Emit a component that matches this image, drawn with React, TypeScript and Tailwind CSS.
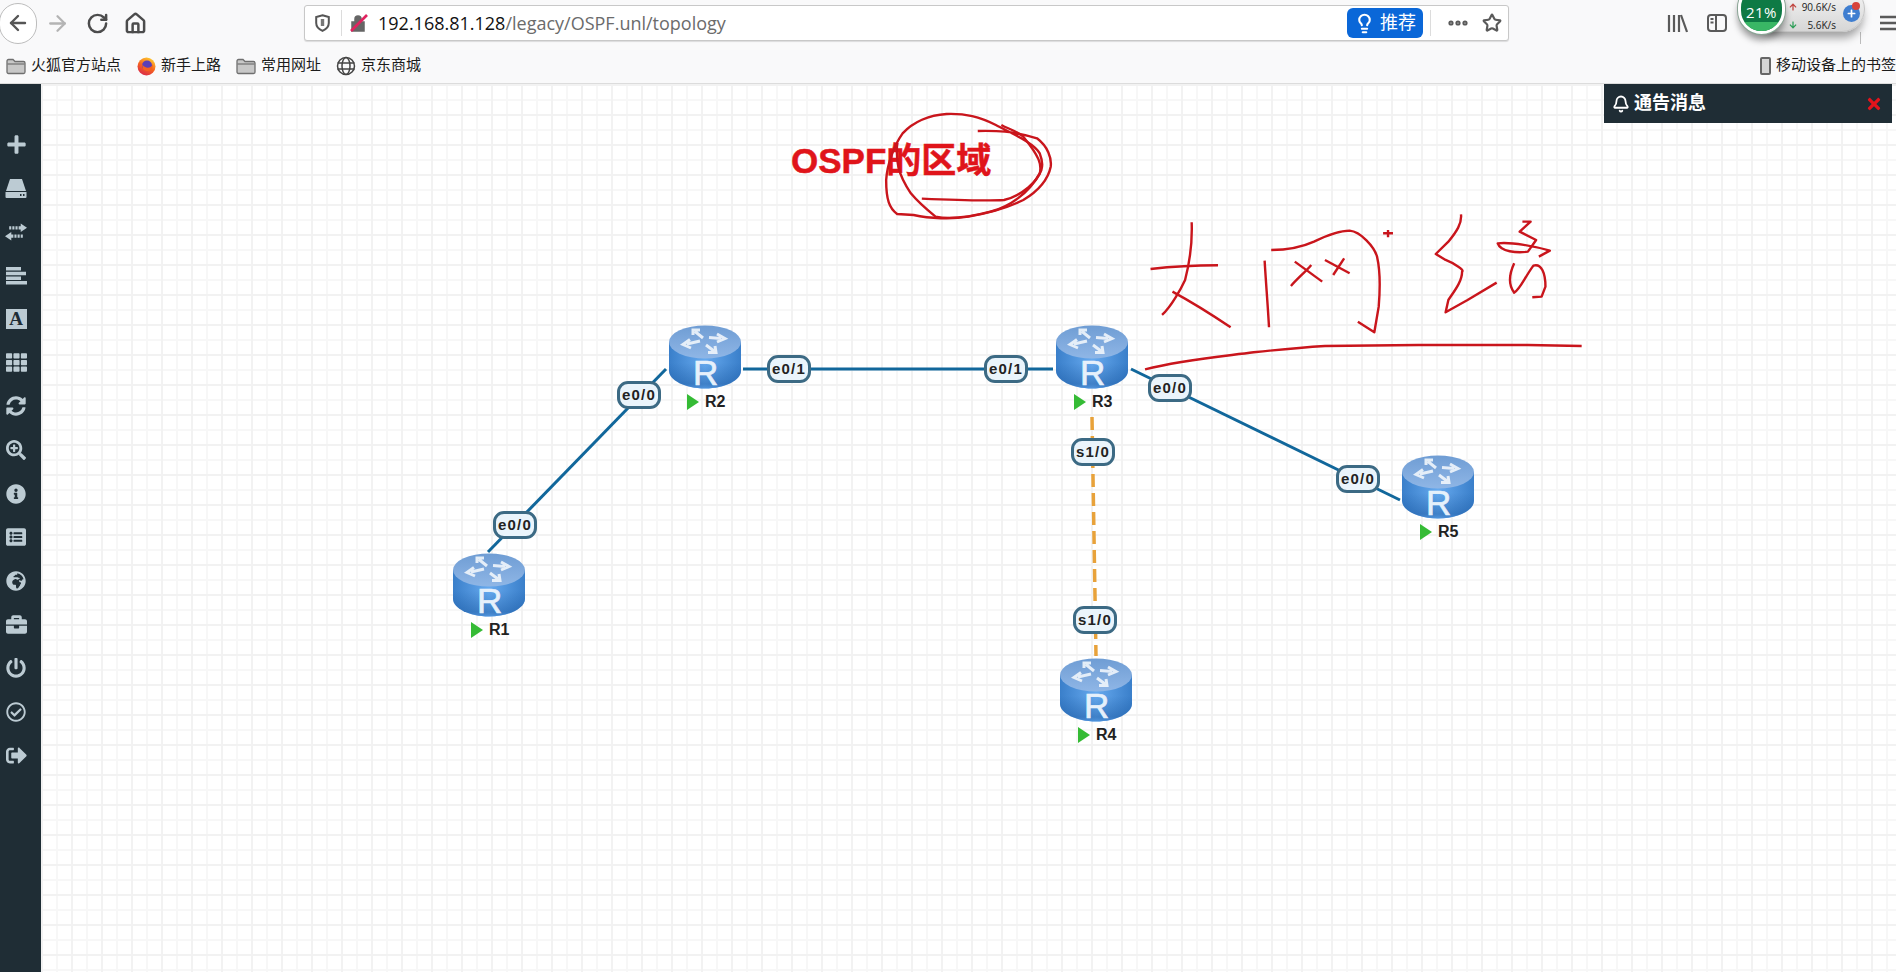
import { ArrowLeft, ArrowRight, Bell, Ellipsis, House, Lightbulb, RotateCw, Star } from "lucide-react";
import {
  FaArrowDown,
  FaArrowUp,
  FaBriefcase,
  FaGlobeAfrica,
  FaInfoCircle,
  FaListAlt,
  FaPlus,
  FaPowerOff,
  FaRegCheckCircle,
  FaSearchPlus,
  FaSignOutAlt,
  FaSyncAlt,
  FaTh,
  FaTimes,
} from "react-icons/fa";

const CJK = "font-['Liberation_Sans','Noto_Sans_CJK_SC',sans-serif]";

const routers = [
  { name: "R1", x: 453, y: 553 },
  { name: "R2", x: 669, y: 325 },
  { name: "R3", x: 1056, y: 325 },
  { name: "R4", x: 1060, y: 658 },
  { name: "R5", x: 1402, y: 455 },
];

const ports = [
  { text: "e0/0", x: 493, y: 511 },
  { text: "e0/0", x: 617, y: 381 },
  { text: "e0/1", x: 767, y: 355 },
  { text: "e0/1", x: 984, y: 355 },
  { text: "e0/0", x: 1148, y: 374 },
  { text: "e0/0", x: 1336, y: 465 },
  { text: "s1/0", x: 1071, y: 438 },
  { text: "s1/0", x: 1073, y: 606 },
];

// pen strokes, traced in a 1568x840 box that gets squeezed onto 860x280
const pen = [
  "M397 93 C430 92 460 92 505 115 C525 140 532 175 530 200 C525 240 505 275 480 300 C450 325 415 340 380 350 C350 358 310 356 280 345 L250 342 C236 325 230 300 230 240 C232 190 245 135 260 100 C280 65 310 45 340 42 C375 40 400 50 430 75 C465 105 500 130 510 160 C516 185 514 205 513 210 C505 245 480 285 445 300 C410 303 350 300 295 296",
  "M250 130 C248 180 250 220 275 280 C290 310 305 330 320 350 C345 358 385 350 420 335 C455 320 490 280 510 220 C514 195 510 170 480 110 C465 90 450 85 440 75",
  "M712 507 C750 500 790 496 835 496",
  "M787 367 C788 410 786 470 775 540 C768 565 750 620 733 645",
  "M752 575 C780 600 820 640 858 682",
  "M920 482 C922 540 926 620 928 682",
  "M932 450 C960 450 990 440 1010 425 C1035 405 1060 392 1075 392 C1095 395 1120 440 1125 470 C1132 520 1130 580 1128 620 L1120 697 L1090 665",
  "M975 485 L1025 545",
  "M1005 495 C995 515 980 535 968 558",
  "M1030 480 L1075 520",
  "M1065 475 L1045 525",
  "M1145 390 V412 M1136 400 H1154",
  "M1278 343 C1280 370 1270 395 1255 425 L1232 462 L1250 480 C1265 490 1285 510 1280 515 C1280 545 1265 575 1255 600 L1250 637 L1290 600 L1343 548",
  "M1390 365 L1405 365 L1385 395 L1415 420 L1400 455 C1380 460 1350 455 1345 430 C1370 425 1415 440 1440 452 L1420 470",
  "M1375 490 C1368 515 1362 550 1375 578 C1385 570 1395 530 1410 497 C1425 490 1432 520 1432 560 L1425 590 L1408 592",
  "M702 808 C770 780 840 770 900 757 C950 748 990 742 1030 738 L1200 735 L1400 735 L1498 738",
];

function RouterIcon({ id }: { id: string }) {
  return (
    <svg width="72" height="64" viewBox="0 0 72 64" className="block overflow-visible">
      <defs>
        <linearGradient id={`side-${id}`} x1="0" x2="1" y1="0" y2="0">
          <stop offset="0" stopColor="#3a7fca" />
          <stop offset="0.5" stopColor="#66a9ee" />
          <stop offset="1" stopColor="#3a7fca" />
        </linearGradient>
        <linearGradient id={`shade-${id}`} x1="0" x2="0" y1="0" y2="1">
          <stop offset="0.45" stopColor="#1b5aa3" stopOpacity="0" />
          <stop offset="0.9" stopColor="#1b5aa3" stopOpacity="0.5" />
          <stop offset="1" stopColor="#4a8ed8" stopOpacity="0.7" />
        </linearGradient>
        <linearGradient id={`top-${id}`} x1="0" x2="0" y1="0" y2="1">
          <stop offset="0" stopColor="#6f9dd4" />
          <stop offset="1" stopColor="#8fb6e6" />
        </linearGradient>
      </defs>
      <path d="M0 17 V46 C0 55 16 63.5 36 63.5 C56 63.5 72 55 72 46 V17 Z" fill={`url(#side-${id})`} />
      <path d="M0 17 V46 C0 55 16 63.5 36 63.5 C56 63.5 72 55 72 46 V17 Z" fill={`url(#shade-${id})`} />
      <ellipse cx="36" cy="17" rx="36" ry="16.5" fill={`url(#top-${id})`} />
      <g fill="none" stroke="#f0f5fb" strokeWidth="3" strokeOpacity="0.9">
        <path d="M34 13 L26 6.5 M31 5 H24 V10" />
        <path d="M31 16 L18 19 M21 14.5 L14 19.5 L22 23" />
        <path d="M40 12.5 L52 13.5 M48 9 L56 13.5 L48 17" />
        <path d="M37 20 L45 26 M39 27.5 H47 L46 21" />
      </g>
      <text x="24" y="60" fontFamily="Liberation Sans" fontSize="35" fill="#e6f0fb" stroke="#e6f0fb" strokeWidth="0.7">
        R
      </text>
    </svg>
  );
}

function Router({ name, x, y }: { name: string; x: number; y: number }) {
  return (
    <div className="absolute w-[72px]" style={{ left: x - 41, top: y - 84 }}>
      <RouterIcon id={name} />
      <div className="mt-[5px] ml-[18px] flex h-4 items-center gap-[6px]">
        <span className="h-0 w-0 border-y-[8px] border-l-[12px] border-y-transparent border-l-[#35bb35]" />
        <span className="font-['Liberation_Sans'] text-base leading-5 font-bold text-[#222]">{name}</span>
      </div>
    </div>
  );
}

function Port({ text, x, y }: { text: string; x: number; y: number }) {
  return (
    <div
      className="absolute flex h-[28px] w-[44px] items-center justify-center rounded-[11px] border-[3px] border-[#3c6a84] bg-[#eaf4fb] font-['Liberation_Sans'] text-[15px] font-bold tracking-[1.2px] text-[#222]"
      style={{ left: x - 41, top: y - 84 }}
    >
      {text}
    </div>
  );
}

function FolderIcon() {
  return (
    <svg width="20" height="18" viewBox="0 0 20 18">
      <path d="M1 4 a1.5 1.5 0 0 1 1.5 -1.5 H7 L9 4.5 H17.5 A1.5 1.5 0 0 1 19 6 V15 A1.5 1.5 0 0 1 17.5 16.5 H2.5 A1.5 1.5 0 0 1 1 15 Z" fill="#c8c8c8" stroke="#6f6f6f" strokeWidth="1.3" />
      <path d="M1.5 7 H18.5" stroke="#6f6f6f" strokeWidth="1.2" />
    </svg>
  );
}

function GlobeIcon() {
  return (
    <svg width="20" height="20" viewBox="0 0 20 20" fill="none" stroke="#444" strokeWidth="1.5">
      <circle cx="10" cy="10" r="8.5" />
      <ellipse cx="10" cy="10" rx="4" ry="8.5" />
      <path d="M1.5 7 H18.5 M1.5 13 H18.5" />
    </svg>
  );
}

function FirefoxIcon() {
  return (
    <svg width="19" height="20" viewBox="0 0 19 20">
      <defs>
        <linearGradient id="ff" x1="0.7" x2="0.2" y1="0" y2="1">
          <stop offset="0" stopColor="#ffcb2e" />
          <stop offset="0.5" stopColor="#f5621f" />
          <stop offset="1" stopColor="#d6224f" />
        </linearGradient>
      </defs>
      <circle cx="9.5" cy="10.5" r="9" fill="url(#ff)" />
      <circle cx="10" cy="9.5" r="5" fill="#5b3fb5" />
      <path d="M5 8 C8 13 14 13 16 8 C16 15 10 17 6 13 Z" fill="#f5621f" />
    </svg>
  );
}

function Toolbar() {
  return (
    <div className="relative flex h-[46px] items-center">
      <div className="relative z-10 ml-[-1px] flex h-[41px] w-[38px] shrink-0 items-center justify-center rounded-full border border-[#bdbdbd] bg-white">
        <ArrowLeft size={24} strokeWidth={2.4} color="#555" />
      </div>
      <ArrowRight size={25} strokeWidth={2.2} color="#b4b4b4" className="ml-[8px] shrink-0" />
      <RotateCw size={23} strokeWidth={2.6} color="#4c4c4c" className="ml-[16px] shrink-0" />
      <House size={23} strokeWidth={2.6} color="#4c4c4c" className="ml-[15px] shrink-0" />

      <div className="ml-[157px] flex h-[36px] w-[1205px] shrink-0 items-center rounded-[3px] border border-[#c8c8c8] bg-white shadow-[0_1px_1px_rgba(0,0,0,0.12)]">
        <svg width="15" height="18" viewBox="0 0 15 18" className="ml-[10px]" fill="none" stroke="#555" strokeWidth="2">
          <path d="M7.5 1.2 L13.8 3 V9 C13.8 13 10.5 15.5 7.5 16.8 C4.5 15.5 1.2 13 1.2 9 V3 Z" />
          <path d="M7.5 5 V12" strokeWidth="3.4" stroke="#777" />
        </svg>
        <div className="ml-[11px] h-[26px] w-px bg-[#dcdcdc]" />
        <svg width="18" height="18" viewBox="0 0 18 18" className="ml-[8px]">
          <path d="M2 8 H14 V17 H2 Z M5 8 V5 A3 3 0 0 1 11 5 V8" fill="#666" stroke="#666" strokeWidth="1.5" />
          <path d="M1 17 L17 1" stroke="#e0225f" strokeWidth="2.6" />
        </svg>
        <div className="ml-[10px] w-[967px] font-['Open_Sans',sans-serif] text-[18px] leading-none whitespace-nowrap text-[#6b6b6b]">
          <span className="text-[#111]">192.168.81.128</span>/legacy/OSPF.unl/topology
        </div>
        <div className="ml-[2px] flex h-[30px] w-[76px] items-center justify-center gap-[5px] rounded-[6px] bg-[#0a67d8] text-[18px] text-white">
          <Lightbulb size={21} strokeWidth={2.4} />
          <span className={CJK}>推荐</span>
        </div>
        <div className="ml-[7px] h-[26px] w-px bg-[#dcdcdc]" />
        <Ellipsis size={24} strokeWidth={3.2} color="#5a5a5a" className="ml-[15px]" />
        <Star size={20} strokeWidth={2.6} color="#5a5a5a" className="ml-[12px]" />
      </div>

      <svg width="21" height="19" viewBox="0 0 21 19" className="ml-[158px] shrink-0" stroke="#5a5a5a" strokeWidth="2.2" fill="none">
        <path d="M2 1 V18 M7 1 V18 M12 1 V18 M14 1 L20 18" />
      </svg>
      <svg width="20" height="18" viewBox="0 0 20 18" className="ml-[19px] shrink-0" stroke="#5a5a5a" strokeWidth="2" fill="none">
        <rect x="1" y="1" width="18" height="16" rx="3" />
        <path d="M9 1 V17 M3.5 5 H6.5 M3.5 8.5 H6.5" />
      </svg>
      <svg width="16" height="16" viewBox="0 0 16 16" className="ml-[153px] shrink-0" stroke="#5a5a5a" strokeWidth="2.4">
        <path d="M0 2 H16 M0 8 H16 M0 14 H16" />
      </svg>
    </div>
  );
}

// traffic monitor plugin that floats above the browser toolbar
function SpeedWidget() {
  return (
    <div className="absolute top-[-14px] left-[1738px] h-[46px] w-[127px]">
      <div className="absolute top-[46px] left-[122px] h-[12px] w-px bg-[#bcbcbc]" />
      <div className="absolute top-0 right-0 h-[46px] w-[110px] rounded-b-[23px] rounded-tr-[23px] border border-[#c4c4c4] bg-gradient-to-b from-[#f7f7f7] to-[#d6d6d6] shadow-[0_8px_8px_-2px_rgba(0,0,0,0.35)]" />
      <div className="absolute top-[-2px] left-0 flex h-[50px] w-[47px] items-start justify-center overflow-hidden rounded-full border-[3px] border-white bg-[#0e7a45] shadow-[0_0_0_1px_#8aa595,0_6px_7px_rgba(0,0,0,0.4)]">
        <span className="mt-[14px] font-['Open_Sans',sans-serif] text-[15px] tracking-[0.5px] text-white">21%</span>
        <div className="absolute inset-x-0 bottom-0 h-[9px] bg-[#39b765]" />
      </div>
      <div className="absolute top-[14px] left-[51px] flex h-8 w-[47px] flex-col justify-between font-['Open_Sans',sans-serif] text-[10px] leading-[14px] text-[#222]">
        <div className="flex items-center justify-between">
          <FaArrowUp size={8} color="#c0453f" />
          <span>90.6K/s</span>
        </div>
        <div className="flex items-center justify-between">
          <FaArrowDown size={8} color="#2e9e58" />
          <span>5.6K/s</span>
        </div>
      </div>
      <div className="absolute top-[19px] left-[105px] flex h-[17px] w-[17px] items-center justify-center rounded-full bg-[#3f7ed0] text-white">
        <FaPlus size={9} />
      </div>
      <div className="absolute top-[16px] left-[114px] h-[8px] w-[8px] rounded-full bg-[#d8433b]" />
    </div>
  );
}

function Bookmark({ icon, label, className }: { icon: React.ReactNode; label: string; className?: string }) {
  return (
    <div className={`flex items-center gap-[5px] ${className ?? ""}`}>
      {icon}
      <span className={`${CJK} text-[15px] whitespace-nowrap text-[#1c1c1c]`}>{label}</span>
    </div>
  );
}

function BookmarksBar() {
  return (
    <div className="flex h-[38px] items-center border-b border-[#dcdcdc] pt-[2px]">
      <Bookmark icon={<FolderIcon />} label="火狐官方站点" className="ml-[6px]" />
      <Bookmark icon={<FirefoxIcon />} label="新手上路" className="ml-[16px]" />
      <Bookmark icon={<FolderIcon />} label="常用网址" className="ml-[15px]" />
      <Bookmark icon={<GlobeIcon />} label="京东商城" className="ml-[15px]" />
      <Bookmark
        className="ml-auto"
        label="移动设备上的书签"
        icon={<div className="h-[18px] w-[11px] rounded-[2px] border-2 border-[#666] bg-[#d5d5d5]" />}
      />
    </div>
  );
}

function Sidebar() {
  const icons = [
    <FaPlus size={21} />,
    <svg width="22" height="19" viewBox="0 0 22 19" fill="currentColor">
      <path d="M5 0 H17 L21 12 H1 Z" />
      <path d="M0.5 13 H21.5 V18 A1 1 0 0 1 20.5 19 H1.5 A1 1 0 0 1 0.5 18 Z M15 15 V17 H16.5 V15 Z M18 15 V17 H19.5 V15 Z" fillRule="evenodd" />
    </svg>,
    <svg width="22" height="18" viewBox="0 0 21 16" fill="currentColor">
      <path d="M15 0 L21 4 L15 8 V5.5 H13 V2.5 H15 Z M12 2.5 H10 V5.5 H12 Z M9 2.5 H7 V5.5 H9 Z M6 2.5 H4 V5.5 H6 Z" />
      <path d="M6 8 L0 12 L6 16 V13.5 H8 V10.5 H6 Z M9 10.5 H11 V13.5 H9 Z M12 10.5 H14 V13.5 H12 Z M15 10.5 H17 V13.5 H15 Z" />
    </svg>,
    <svg width="21" height="18" viewBox="0 0 21 18" fill="currentColor">
      <path d="M0 0 H15 V3.5 H0 Z M0 4.7 H20 V8.2 H0 Z M0 9.4 H15 V12.9 H0 Z M0 14.1 H21 V17.6 H0 Z" />
    </svg>,
    <span className="flex h-[20px] w-[21px] items-center justify-center bg-[#bccbd3] font-['Liberation_Serif'] text-[19px] font-bold text-[#1f2d35]">
      A
    </span>,
    <FaTh size={21} />,
    <FaSyncAlt size={20} />,
    <FaSearchPlus size={20} />,
    <FaInfoCircle size={20} />,
    <FaListAlt size={20} />,
    <FaGlobeAfrica size={20} />,
    <FaBriefcase size={21} />,
    <FaPowerOff size={20} />,
    <FaRegCheckCircle size={20} />,
    <FaSignOutAlt size={21} />,
  ];
  return (
    <aside className="flex w-[41px] shrink-0 flex-col items-center bg-[#1f2d35] pt-[39px] pr-[9px] text-[#bccbd3]">
      {icons.map((icon, i) => (
        <div key={i} className="flex h-[43.6px] items-center justify-center">
          {icon}
        </div>
      ))}
    </aside>
  );
}

function Canvas() {
  return (
    <main className="relative flex-1 overflow-hidden bg-white bg-[linear-gradient(to_right,#f2f2f2_2px,transparent_2px),linear-gradient(to_bottom,#f2f2f2_2px,transparent_2px),linear-gradient(to_right,#f7f7f7_2px,transparent_2px),linear-gradient(to_bottom,#f7f7f7_2px,transparent_2px)] [background-size:30px_30px,30px_30px,15px_15px,15px_15px]">
      <svg width="1855" height="888" viewBox="41 84 1855 888" className="absolute inset-0">
        <g stroke="#11679b" strokeWidth="3" fill="none">
          <path d="M488 552 L666 369" />
          <path d="M743 369 H1053" />
          <path d="M1131 369 L1400 500" />
        </g>
        <path d="M1092 417 L1096 656" stroke="#e8a23a" strokeWidth="3.5" strokeDasharray="13 6" fill="none" />
      </svg>

      {routers.map((r) => (
        <Router key={r.name} {...r} />
      ))}
      {ports.map((p) => (
        <Port key={`${p.x}-${p.y}`} {...p} />
      ))}

      <div className={`absolute top-[57px] left-[750px] ${CJK} text-[35px] leading-10 font-bold whitespace-nowrap text-[#e0141a] [-webkit-text-stroke:0.5px_#e0141a]`}>
        OSPF的区域
      </div>

      <svg width="1855" height="888" viewBox="41 84 1855 888" className="absolute inset-0">
        <g transform="translate(760 100) scale(0.5485 0.3333)" fill="none" stroke="#c9151c" strokeWidth="2.4" strokeLinejoin="round">
          {pen.map((d, i) => (
            <path key={i} d={d} vectorEffect="non-scaling-stroke" />
          ))}
        </g>
      </svg>

      <div className="absolute top-0 right-[4px] flex h-[39px] w-[288px] items-center bg-[#1f2d35] pr-[9px] pl-[8px] text-white">
        <Bell size={18} strokeWidth={2.4} />
        <span className={`ml-[4px] ${CJK} text-[18px] font-bold`}>通告消息</span>
        <FaTimes size={18} color="#e3141c" className="ml-auto" />
      </div>
    </main>
  );
}

export default function App() {
  return (
    <div className="relative flex h-[972px] w-[1896px] flex-col overflow-hidden bg-[#f9f9fa]">
      <header className="relative shrink-0">
        <Toolbar />
        <BookmarksBar />
        <SpeedWidget />
      </header>
      <div className="flex min-h-0 flex-1">
        <Sidebar />
        <Canvas />
      </div>
    </div>
  );
}
